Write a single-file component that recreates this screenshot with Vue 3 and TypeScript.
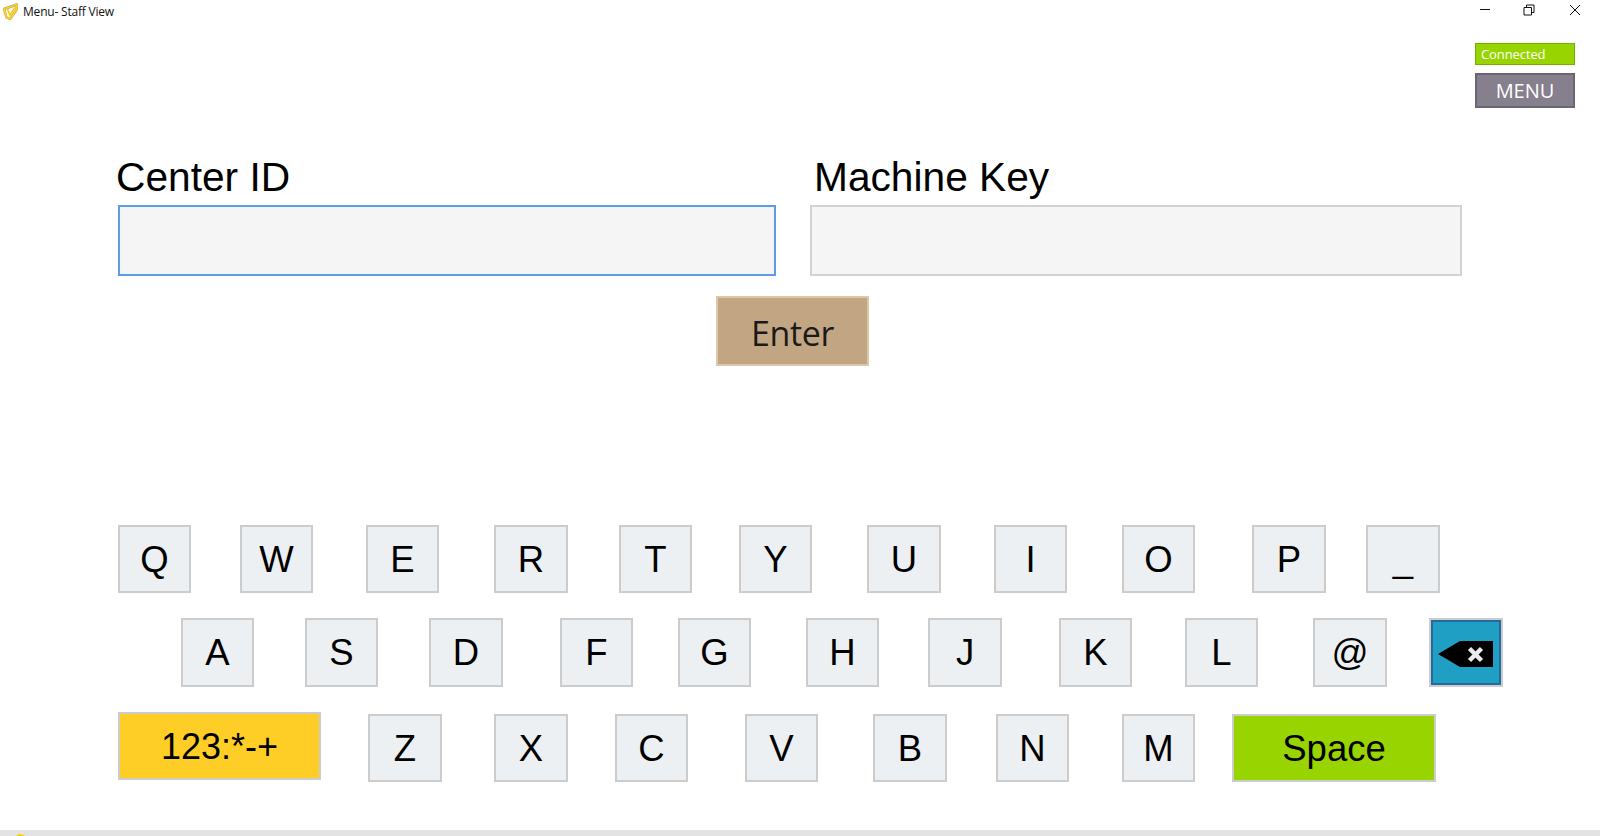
<template>
  <div class="window">
    <header class="titlebar">
      <svg class="app-icon" width="18" height="20" viewBox="0 0 18 20">
        <path d="M3 8 L16 3.5 L15.5 9 L9 18 L5.5 16.5 Z" fill="#fffbe6" stroke="#a59d72" stroke-width="2.4" stroke-linejoin="round" />
        <path d="M3 8 L16 3.5 L15.5 9 L9 18 L5.5 16.5 Z" fill="none" stroke="#fad225" stroke-width="1.8" stroke-linejoin="round" />
        <path d="M6.5 8.5 L9 14 L14 6.5" fill="none" stroke="#f5c81e" stroke-width="1.6" />
      </svg>
      <span class="title">Menu- Staff View</span>
      <div class="controls">
        <svg width="12" height="12" viewBox="0 0 12 12"><path d="M1 5.5 H11" stroke="#111" fill="none" /></svg>
        <svg width="12" height="12" viewBox="0 0 12 12">
          <path d="M1 3.5 H8.5 V11 H1 Z M3.5 3.5 V1 H11 V8.5 H8.5" stroke="#111" fill="none" />
        </svg>
        <svg width="12" height="12" viewBox="0 0 12 12"><path d="M1 1 L11 11 M11 1 L1 11" stroke="#111" fill="none" /></svg>
      </div>
    </header>

    <div class="status">
      <div class="connected">Connected</div>
      <button class="menu-btn" type="button">MENU</button>
    </div>

    <form class="login" @submit.prevent>
      <div class="fields">
        <div class="field center">
          <label for="center-id">Center ID</label>
          <input id="center-id" v-model="centerId" class="focused" type="text">
        </div>
        <div class="field machine">
          <label for="machine-key">Machine Key</label>
          <input id="machine-key" v-model="machineKey" type="text">
        </div>
      </div>
      <button class="enter" type="submit">Enter</button>
    </form>

    <div class="keyboard">
      <div v-for="(row, r) in rows" :key="r" class="row">
        <button
          v-for="k in row"
          :key="k.label"
          type="button"
          :class="['key', k.kind]"
          :style="{ marginLeft: k.gap + 'px', width: k.width + 'px' }"
          :aria-label="k.label"
        >
          <svg v-if="k.kind === 'back'" width="56" height="26" viewBox="0 0 56 26">
            <path d="M0 13 L22 0 H55 V26 H22 Z" fill="#000" />
            <path d="M31.5 7.5 L43.5 19.5 M43.5 7.5 L31.5 19.5" stroke="#ececec" stroke-width="4.5" fill="none" />
          </svg>
          <template v-else>{{ k.label }}</template>
        </button>
      </div>
    </div>

    <footer class="taskbar">
      <span class="dot" />
    </footer>
  </div>
</template>

<script setup lang="ts">
import { ref } from 'vue'

interface KeyDef {
  label: string
  x: number
  end: number
  kind?: string
}

const centerId = ref('')
const machineKey = ref('')

// x / end are where each key sits on the row, gaps are not even on this keyboard
const layout: KeyDef[][] = [
  [
    { label: 'Q', x: 118, end: 191 },
    { label: 'W', x: 240, end: 313 },
    { label: 'E', x: 366, end: 439 },
    { label: 'R', x: 494, end: 568 },
    { label: 'T', x: 619, end: 692 },
    { label: 'Y', x: 739, end: 812 },
    { label: 'U', x: 867, end: 941 },
    { label: 'I', x: 994, end: 1067 },
    { label: 'O', x: 1122, end: 1195 },
    { label: 'P', x: 1252, end: 1326 },
    { label: '_', x: 1366, end: 1440 }
  ],
  [
    { label: 'A', x: 181, end: 254 },
    { label: 'S', x: 305, end: 378 },
    { label: 'D', x: 429, end: 503 },
    { label: 'F', x: 560, end: 633 },
    { label: 'G', x: 678, end: 751 },
    { label: 'H', x: 806, end: 879 },
    { label: 'J', x: 928, end: 1002 },
    { label: 'K', x: 1059, end: 1132 },
    { label: 'L', x: 1185, end: 1258 },
    { label: '@', x: 1313, end: 1387 },
    { label: 'Backspace', x: 1429, end: 1503, kind: 'back' }
  ],
  [
    { label: '123:*-+', x: 118, end: 321, kind: 'symbols' },
    { label: 'Z', x: 368, end: 442 },
    { label: 'X', x: 494, end: 568 },
    { label: 'C', x: 615, end: 688 },
    { label: 'V', x: 745, end: 818 },
    { label: 'B', x: 873, end: 947 },
    { label: 'N', x: 996, end: 1069 },
    { label: 'M', x: 1122, end: 1195 },
    { label: 'Space', x: 1232, end: 1436, kind: 'space' }
  ]
]

const rows = layout.map(row =>
  row.map((k, i) => ({
    ...k,
    gap: k.x - (i ? row[i - 1].end : 0),
    width: k.end - k.x
  }))
)
</script>

<style>
html,
body {
  margin: 0;
  background: #fff;
}
</style>

<style scoped>
.window {
  width: 1600px;
  height: 836px;
  display: flex;
  flex-direction: column;
  overflow: hidden;
  background: #fff;
  font-family: "Liberation Sans", Arial, sans-serif;
  color: #000;
}

.titlebar {
  height: 24px;
  display: flex;
  align-items: flex-start;
  font-family: "Open Sans", sans-serif;
  font-size: 12px;
}

.app-icon {
  margin-left: 1px;
  margin-top: 1px;
  flex: none;
}

.title {
  margin-left: 4px;
  margin-top: 3px;
  letter-spacing: -0.2px;
  color: #111;
}

.controls {
  margin-left: auto;
  margin-right: 19px;
  display: flex;
  gap: 32px;
  padding-top: 4px;
}

.controls svg {
  display: block;
}

.controls svg:last-child {
  margin-left: 2px;
}

.status {
  margin-top: 19px;
  margin-right: 25px;
  align-self: flex-end;
  width: 100px;
  display: flex;
  flex-direction: column;
  gap: 8px;
  font-family: "Open Sans", sans-serif;
}

.connected {
  height: 22px;
  box-sizing: border-box;
  padding-left: 5px;
  line-height: 20px;
  font-size: 13px;
  letter-spacing: -0.1px;
  color: #fff;
  background: #98d400;
  border: 1px solid #6fb300;
}

.menu-btn {
  height: 35px;
  padding: 0;
  font-family: inherit;
  font-size: 20px;
  color: #fff;
  background: #857f8e;
  border: 2px solid #6a6772;
}

.login {
  margin-top: 46px;
  padding-left: 118px;
}

.fields {
  display: flex;
  gap: 34px;
}

.field {
  display: flex;
  flex-direction: column;
}

.field.center {
  width: 658px;
}

.field.machine {
  width: 652px;
}

.field label {
  height: 46px;
  margin-left: -2px;
  margin-bottom: 5px;
  font-size: 40.7px;
  line-height: 46px;
}

.field.machine label {
  margin-left: 4px;
}

.field input {
  height: 71px;
  box-sizing: border-box;
  padding: 0 10px;
  font-size: 28px;
  background: #f5f5f5;
  border: 2px solid #d2d2d2;
  outline: none;
}

.field input.focused {
  border-color: #5a9de6;
}

.enter {
  display: block;
  width: 153px;
  height: 70px;
  margin: 20px 0 0 598px;
  padding: 4px 0 0;
  font-family: "Open Sans", sans-serif;
  font-size: 34px;
  letter-spacing: -0.4px;
  color: #1a1a1a;
  background: #c2a683;
  border: 2px solid #dcc8a9;
}

.keyboard {
  margin-top: 159px;
  display: flex;
  flex-direction: column;
  gap: 25px;
}

.row {
  display: flex;
  align-items: flex-start;
}

.key {
  flex: none;
  height: 68px;
  padding: 1px 0 0;
  box-sizing: border-box;
  display: flex;
  align-items: center;
  justify-content: center;
  font-family: inherit;
  font-size: 36.5px;
  color: #000;
  background: #ecf0f3;
  border: 2px solid #cccccc;
}

.row:nth-child(2) .key {
  height: 69px;
}

.row:nth-child(3) .key {
  margin-top: 2px;
}

.row:nth-child(3) .key.symbols {
  margin-top: 0;
  font-size: 36px;
  background: #ffce26;
}

.key.space {
  background: #98d400;
}

.key.back {
  background: #1f9fc4;
  box-shadow: inset 0 0 0 2px #236a9e;
}

.key.back svg {
  display: block;
  margin-top: 2px;
}

.taskbar {
  margin-top: auto;
  height: 6px;
  background: #e3e3e3;
  position: relative;
  overflow: hidden;
}

.dot {
  position: absolute;
  left: 15px;
  top: 4px;
  width: 11px;
  height: 11px;
  border-radius: 50%;
  background: #f6d000;
}
</style>
